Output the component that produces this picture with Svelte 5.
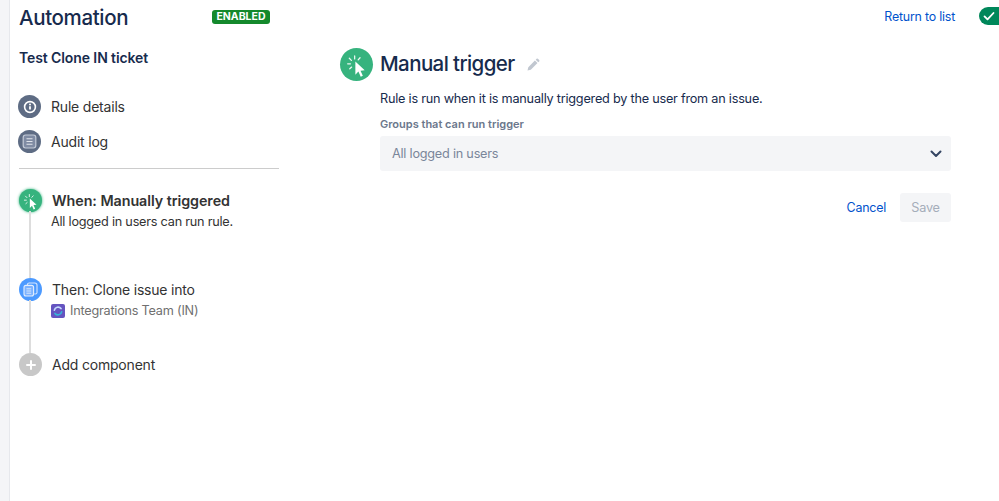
<script lang="ts">
	const navItems = [
		{ label: 'Rule details', icon: 'info' },
		{ label: 'Audit log', icon: 'log' }
	];
</script>

{#snippet clickIcon(size)}
	<svg width={size} height={size} viewBox="0 0 24 24" fill="none">
		<g stroke="#fff" stroke-width="1.1" stroke-linecap="round" opacity="0.9">
			<path d="M10 4.2v2.6" />
			<path d="M5.4 6.2l1.8 1.8" />
			<path d="M4 11h2.4" />
			<path d="M14.6 5.8l-1.6 1.8" />
			<path d="M5.8 15.2l1.6-1.4" />
		</g>
		<path d="M10.6 9l8 7.6-3.6.3 2 4.4-1.8.8-2-4.5-2.6 2.7z" fill="#fff" />
	</svg>
{/snippet}

<div class="page">
	<div class="rail"></div>

	<aside class="sidebar">
		<header class="brand">
			<h1>Automation</h1>
			<span class="lozenge">ENABLED</span>
		</header>
		<h2>Test Clone IN ticket</h2>

		<nav class="nav">
			{#each navItems as item}
				<div class="nav-item">
					<span class="dot slate">
						{#if item.icon === 'info'}
							<svg width="14" height="14" viewBox="0 0 14 14" fill="none">
								<circle cx="7" cy="7" r="5.4" stroke="#fff" stroke-width="1.6" />
								<path d="M7 6.3v3.2" stroke="#fff" stroke-width="1.8" />
								<circle cx="7" cy="4.4" r="1" fill="#fff" />
							</svg>
						{:else}
							<svg width="15" height="15" viewBox="0 0 15 15" fill="none">
								<rect x="1.2" y="1" width="12.6" height="13" rx="2.4" fill="#7f8ba3" stroke="#c4cbd8" stroke-width="1.2" />
								<path d="M4.5 4.8h6M4.5 7.5h6M4.5 10.2h6" stroke="#dfe3ea" stroke-width="1.1" />
							</svg>
						{/if}
					</span>
					<span>{item.label}</span>
				</div>
			{/each}
		</nav>

		<hr />

		<ol class="steps">
			<li class="step when">
				<span class="dot green">{@render clickIcon(20)}</span>
				<div>
					<div class="step-title"><strong>When: Manually triggered</strong></div>
					<div class="step-sub">All logged in users can run rule.</div>
				</div>
			</li>
			<li class="step then">
				<span class="dot blue">
					<svg width="15" height="15" viewBox="0 0 15 15" fill="none">
						<path d="M4.5 3.2V2.6A1.6 1.6 0 0 1 6.1 1h5.8A2.1 2.1 0 0 1 14 3.1v7.3a1.6 1.6 0 0 1-1.6 1.6h-1.2" stroke="#d5e5fd" stroke-width="1.1" />
						<rect x="1" y="3.4" width="9.6" height="10.6" rx="2" fill="#7db3ff" stroke="#e3eefd" stroke-width="1.1" />
						<path d="M3.4 6.8h4.8M3.4 9h4.8M3.4 11.2h4.8" stroke="#e3eefd" stroke-width="0.9" />
					</svg>
				</span>
				<div>
					<div class="step-title">Then: Clone issue into</div>
					<div class="step-project">
						<svg width="14" height="14" viewBox="0 0 14 14" fill="none">
							<rect width="14" height="14" rx="2" fill="#6554c0" />
							<path d="M3.4 6.2A3.7 3.7 0 0 1 10 4.6" stroke="#c5dcff" stroke-width="1.7" stroke-linecap="round" />
							<path d="M10.6 7.8A3.7 3.7 0 0 1 4 9.4" stroke="#36b5d8" stroke-width="1.7" stroke-linecap="round" />
						</svg>
						<span>Integrations Team (IN)</span>
					</div>
				</div>
			</li>
			<li class="step add">
				<span class="dot grey">
					<svg width="10" height="10" viewBox="0 0 10 10"><path d="M5 1v8M1 5h8" stroke="#fff" stroke-width="2" stroke-linecap="round" /></svg>
				</span>
				<div class="step-title">Add component</div>
			</li>
		</ol>
	</aside>

	<main class="main">
		<div class="topbar">
			<a href="#list" class="link">Return to list</a>
			<span class="toggle">
				<svg width="14" height="14" viewBox="0 0 14 14" fill="none"><path d="M2.5 7.4l3 3 6-6.4" stroke="#fff" stroke-width="1.8" stroke-linecap="round" stroke-linejoin="round" /></svg>
			</span>
		</div>

		<div class="title-row">
			<span class="dot green big">{@render clickIcon(28)}</span>
			<h2 class="title">Manual trigger</h2>
			<svg width="14" height="14" viewBox="0 0 14 14"><path d="M1.5 12.5l.8-3.3 6.6-6.7 2.6 2.5-6.7 6.7zM9.7 1.7l.9-.9a1 1 0 0 1 1.3 0l1.3 1.3a1 1 0 0 1 0 1.3l-.9.9z" fill="#c1c7d0" /></svg>
		</div>

		<div class="form">
			<p>Rule is run when it is manually triggered by the user from an issue.</p>
			<label for="groups">Groups that can run trigger</label>
			<div class="select" id="groups">
				<span>All logged in users</span>
				<svg width="12" height="8" viewBox="0 0 12 8" fill="none"><path d="M1.5 1.5L6 6l4.5-4.5" stroke="#344563" stroke-width="2" stroke-linecap="round" stroke-linejoin="round" /></svg>
			</div>
			<div class="actions">
				<a href="#cancel" class="link">Cancel</a>
				<button disabled>Save</button>
			</div>
		</div>
	</main>
</div>

<style>
	:global(body) {
		background: #fff;
		font-family: Inter, "Noto Sans", sans-serif;
		overflow: hidden;
	}

	.page {
		display: flex;
		width: 999px;
		height: 501px;
		overflow: hidden;
		color: #172b4d;
		font-size: 14px;
	}

	.rail {
		flex: none;
		width: 9px;
		background: #f4f5f7;
		border-right: 1px solid #e6e8ec;
	}

	.sidebar {
		flex: none;
		width: 260px;
		padding-left: 9px;
	}

	.brand {
		display: flex;
		align-items: center;
		justify-content: space-between;
		height: 34px;
		padding-right: 9px;
	}

	h1 {
		margin: 0;
		font-size: 20.5px;
		font-weight: 500;
		letter-spacing: -0.36px;
	}

	.lozenge {
		padding: 0 4.5px;
		height: 14px;
		line-height: 14px;
		border-radius: 3px;
		background: #14892c;
		color: #fff;
		font-size: 10.5px;
		font-weight: 700;
	}

	.sidebar > h2 {
		margin: 15px 0 0;
		font-size: 14px;
		line-height: 18px;
		font-weight: 600;
		letter-spacing: -0.1px;
	}

	.nav {
		margin-top: 28px;
		margin-left: -1px;
		display: flex;
		flex-direction: column;
		gap: 12px;
	}

	.nav-item {
		display: flex;
		align-items: center;
		gap: 10px;
		height: 23px;
		font-size: 14px;
		letter-spacing: -0.2px;
		color: #333;
	}

	.dot {
		flex: none;
		display: flex;
		align-items: center;
		justify-content: center;
		width: 23px;
		height: 23px;
		border-radius: 50%;
	}

	.slate { background: #5e6c84; }
	.green { background: #36b37e; }
	.blue { background: #4c9aff; }
	.grey { background: #c8c8c8; }

	hr {
		margin: 15px 0 0;
		border: 0;
		border-top: 1px solid #ccc;
	}

	.steps {
		list-style: none;
		margin: 20px 0 0;
		padding: 0;
	}

	.step {
		position: relative;
		display: flex;
		gap: 10px;
	}

	.step:not(.add)::before {
		content: "";
		position: absolute;
		left: 10px;
		top: 22px;
		bottom: 0;
		width: 2px;
		background: #ddd;
	}

	.when { height: 89px; }
	.then { height: 75px; }
	.add { align-items: center; }

	.when .dot {
		box-shadow: 0 0 3px #36b37e;
	}

	.step-title {
		height: 23px;
		line-height: 23px;
		font-size: 14px;
		letter-spacing: -0.2px;
		color: #333;
	}

	.step-title strong {
		font-size: 14.3px;
		letter-spacing: -0.05px;
		font-weight: 600;
	}

	.step-sub {
		margin-left: -1px;
		font-size: 12.7px;
		letter-spacing: -0.23px;
		line-height: 20px;
		color: #333;
	}

	.step-project {
		display: flex;
		align-items: center;
		gap: 5px;
		margin-left: -1px;
		font-size: 12.7px;
		letter-spacing: -0.23px;
		line-height: 20px;
		color: #707070;
	}

	.main {
		flex: 1;
		min-width: 0;
		padding-left: 61px;
	}

	.topbar {
		display: flex;
		align-items: center;
		justify-content: flex-end;
		gap: 24px;
		height: 32px;
		margin-right: -24px;
	}

	.link {
		color: #0052cc;
		font-size: 12.4px;
		letter-spacing: -0.2px;
		text-decoration: none;
	}

	.toggle {
		display: flex;
		align-items: center;
		flex: none;
		width: 44px;
		height: 18px;
		padding-left: 3px;
		box-sizing: border-box;
		border-radius: 9px;
		background: #00875a;
	}

	.title-row {
		display: flex;
		align-items: center;
		gap: 8px;
		margin-top: 16px;
		height: 33px;
	}

	.big {
		width: 33px;
		height: 33px;
	}

	.title {
		margin: 0 3px 2px -1px;
		font-size: 20.5px;
		font-weight: 500;
		letter-spacing: -0.6px;
	}

	.form {
		margin-left: 40px;
		width: 571px;
	}

	p {
		margin: 8px 0 0;
		font-size: 12.7px;
		letter-spacing: -0.23px;
		line-height: 20px;
	}

	label {
		display: block;
		margin-top: 8px;
		font-size: 11px;
		line-height: 14px;
		font-weight: 600;
		color: #6b778c;
	}

	.select {
		display: flex;
		align-items: center;
		justify-content: space-between;
		margin-top: 5px;
		height: 35px;
		padding: 0 9px 0 12px;
		border-radius: 3px;
		background: #f4f5f7;
		font-size: 12.7px;
		letter-spacing: -0.23px;
		color: #7a869a;
	}

	.actions {
		display: flex;
		align-items: center;
		justify-content: flex-end;
		gap: 14px;
		margin-top: 22px;
	}

	button {
		width: 51px;
		height: 29px;
		border: 0;
		border-radius: 3px;
		background: #f4f5f7;
		color: #a5adba;
		font: inherit;
		font-size: 12.7px;
		letter-spacing: -0.2px;
	}
</style>
